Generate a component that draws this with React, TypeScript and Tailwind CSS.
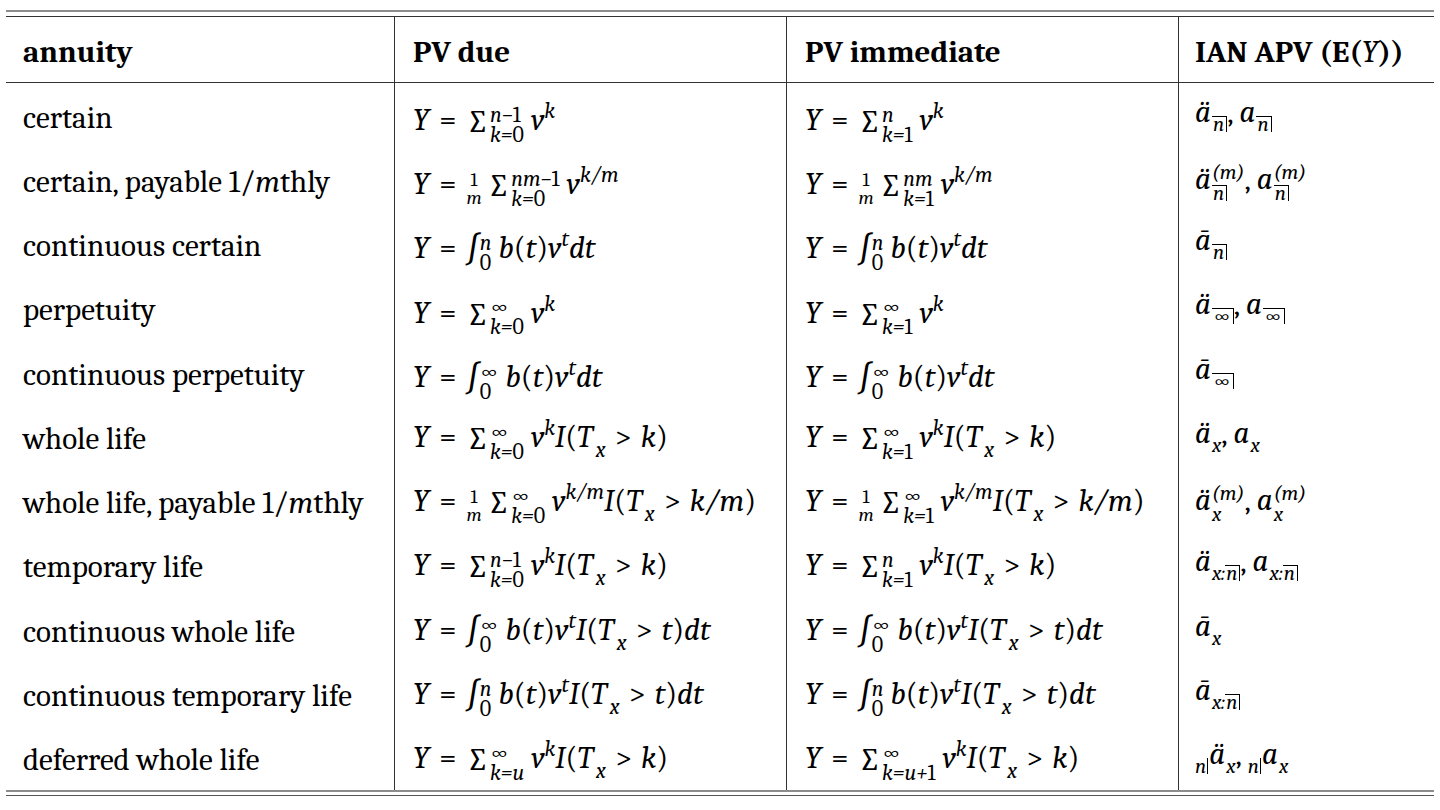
import React from "react";

type N = React.ReactNode;

const I = ({ children }: { children: N }) => <span className="italic">{children}</span>;
const Sup = ({ children }: { children: N }) => (
  <span className="text-[22px] italic align-[12px]">{children}</span>
);
const Sub = ({ children }: { children: N }) => (
  <span className="text-[22px] italic align-[-10px] ml-[3px]">{children}</span>
);

const Stack = ({ sup, sub }: { sup: N; sub: N }) => (
  <span className="inline-flex flex-col align-middle text-[22px] leading-[20px] italic ml-[1px] mr-[7px] relative top-[2px]">
    <span>{sup}</span>
    <span>{sub}</span>
  </span>
);

const Eq = () => (
  <>
    <I>Y</I>
    <span className="mx-[10px]">=</span>
  </>
);

const Frac = () => (
  <span className="inline-flex flex-col items-center align-middle text-[19px] leading-[18px] mr-[6px] relative top-[2px]">
    <span>1</span>
    <span className="italic">m</span>
  </span>
);

const Sum = ({ sub, sup }: { sub: N; sup: N }) => (
  <>
    <span className="text-[32px] relative top-[2px]">∑</span>
    <Stack sup={sup} sub={sub} />
  </>
);

const Int = ({ sup }: { sup: N }) => (
  <>
    <span className="italic text-[33px] relative top-[2px]">∫</span>
    <Stack sup={sup} sub={<span className="not-italic">0</span>} />
  </>
);

const Ind = ({ v }: { v: N }) => (
  <>
    <I>I</I>(<I>T</I>
    <Sub>x</Sub>
    <span className="mx-[9px]">&gt;</span>
    <I>{v}</I>)
  </>
);

const Btv = () => (
  <>
    <I>b</I>(<I>t</I>)<I>v</I>
    <Sup>t</Sup>
  </>
);

const Angle = ({ children }: { children: N }) => (
  <span className="inline-block border-t border-r border-black leading-[15px] pl-[1px] pr-[2px]">{children}</span>
);

const An = ({ base, sub }: { base: N; sub: N }) => (
  <>
    <I>{base}</I>
    <span className="inline-block align-[-9px] text-[21px] italic ml-[1px]">{sub}</span>
  </>
);

const AnM = ({ base, sub }: { base: N; sub: N }) => (
  <>
    <I>{base}</I>
    <span className="inline-flex flex-col align-middle text-[21px] leading-[21px] italic ml-[1px] relative top-[1px]">
      <span>(m)</span>
      <span>{sub}</span>
    </span>
  </>
);

const Minus = "−";
const Inf = () => <span className="not-italic">∞</span>;
const D = ({ d }: { d: string }) => <span className="not-italic">{d}</span>;

const rows: { name: N; due: N; imm: N; apv: N }[] = [
  {
    name: "certain",
    due: (
      <>
        <Eq />
        <Sum sub={<>k=<D d="0" /></>} sup={<>n{Minus}<D d="1" /></>} />
        <I>v</I>
        <Sup>k</Sup>
      </>
    ),
    imm: (
      <>
        <Eq />
        <Sum sub={<>k=<D d="1" /></>} sup="n" />
        <I>v</I>
        <Sup>k</Sup>
      </>
    ),
    apv: (
      <>
        <An base="ä" sub={<Angle>n</Angle>} />,{" "}
        <An base="a" sub={<Angle>n</Angle>} />
      </>
    ),
  },
  {
    name: (
      <>
        certain, payable 1/<I>m</I>thly
      </>
    ),
    due: (
      <>
        <Eq />
        <Frac />
        <Sum sub={<>k=<D d="0" /></>} sup={<>nm{Minus}<D d="1" /></>} />
        <I>v</I>
        <Sup>k/m</Sup>
      </>
    ),
    imm: (
      <>
        <Eq />
        <Frac />
        <Sum sub={<>k=<D d="1" /></>} sup="nm" />
        <I>v</I>
        <Sup>k/m</Sup>
      </>
    ),
    apv: (
      <>
        <AnM base="ä" sub={<Angle>n</Angle>} />, <AnM base="a" sub={<Angle>n</Angle>} />
      </>
    ),
  },
  {
    name: "continuous certain",
    due: (
      <>
        <Eq />
        <Int sup="n" />
        <Btv />
        <I>dt</I>
      </>
    ),
    imm: (
      <>
        <Eq />
        <Int sup="n" />
        <Btv />
        <I>dt</I>
      </>
    ),
    apv: <An base="ā" sub={<Angle>n</Angle>} />,
  },
  {
    name: "perpetuity",
    due: (
      <>
        <Eq />
        <Sum sub={<>k=<D d="0" /></>} sup={<Inf />} />
        <I>v</I>
        <Sup>k</Sup>
      </>
    ),
    imm: (
      <>
        <Eq />
        <Sum sub={<>k=<D d="1" /></>} sup={<Inf />} />
        <I>v</I>
        <Sup>k</Sup>
      </>
    ),
    apv: (
      <>
        <An base="ä" sub={<Angle><Inf /></Angle>} />,{" "}
        <An base="a" sub={<Angle><Inf /></Angle>} />
      </>
    ),
  },
  {
    name: "continuous perpetuity",
    due: (
      <>
        <Eq />
        <Int sup={<Inf />} />
        <Btv />
        <I>dt</I>
      </>
    ),
    imm: (
      <>
        <Eq />
        <Int sup={<Inf />} />
        <Btv />
        <I>dt</I>
      </>
    ),
    apv: <An base="ā" sub={<Angle><Inf /></Angle>} />,
  },
  {
    name: "whole life",
    due: (
      <>
        <Eq />
        <Sum sub={<>k=<D d="0" /></>} sup={<Inf />} />
        <I>v</I>
        <Sup>k</Sup>
        <Ind v="k" />
      </>
    ),
    imm: (
      <>
        <Eq />
        <Sum sub={<>k=<D d="1" /></>} sup={<Inf />} />
        <I>v</I>
        <Sup>k</Sup>
        <Ind v="k" />
      </>
    ),
    apv: (
      <>
        <An base="ä" sub="x" />, <An base="a" sub="x" />
      </>
    ),
  },
  {
    name: (
      <>
        whole life, payable 1/<I>m</I>thly
      </>
    ),
    due: (
      <>
        <Eq />
        <Frac />
        <Sum sub={<>k=<D d="0" /></>} sup={<Inf />} />
        <I>v</I>
        <Sup>k/m</Sup>
        <Ind v="k/m" />
      </>
    ),
    imm: (
      <>
        <Eq />
        <Frac />
        <Sum sub={<>k=<D d="1" /></>} sup={<Inf />} />
        <I>v</I>
        <Sup>k/m</Sup>
        <Ind v="k/m" />
      </>
    ),
    apv: (
      <>
        <AnM base="ä" sub="x" />, <AnM base="a" sub="x" />
      </>
    ),
  },
  {
    name: "temporary life",
    due: (
      <>
        <Eq />
        <Sum sub={<>k=<D d="0" /></>} sup={<>n{Minus}<D d="1" /></>} />
        <I>v</I>
        <Sup>k</Sup>
        <Ind v="k" />
      </>
    ),
    imm: (
      <>
        <Eq />
        <Sum sub={<>k=<D d="1" /></>} sup="n" />
        <I>v</I>
        <Sup>k</Sup>
        <Ind v="k" />
      </>
    ),
    apv: (
      <>
        <An base="ä" sub={<>x:<Angle>n</Angle></>} />,{" "}
        <An base="a" sub={<>x:<Angle>n</Angle></>} />
      </>
    ),
  },
  {
    name: "continuous whole life",
    due: (
      <>
        <Eq />
        <Int sup={<Inf />} />
        <Btv />
        <Ind v="t" />
        <I>dt</I>
      </>
    ),
    imm: (
      <>
        <Eq />
        <Int sup={<Inf />} />
        <Btv />
        <Ind v="t" />
        <I>dt</I>
      </>
    ),
    apv: <An base="ā" sub="x" />,
  },
  {
    name: "continuous temporary life",
    due: (
      <>
        <Eq />
        <Int sup="n" />
        <Btv />
        <Ind v="t" />
        <I>dt</I>
      </>
    ),
    imm: (
      <>
        <Eq />
        <Int sup="n" />
        <Btv />
        <Ind v="t" />
        <I>dt</I>
      </>
    ),
    apv: <An base="ā" sub={<>x:<Angle>n</Angle></>} />,
  },
  {
    name: "deferred whole life",
    due: (
      <>
        <Eq />
        <Sum sub="k=u" sup={<Inf />} />
        <I>v</I>
        <Sup>k</Sup>
        <Ind v="k" />
      </>
    ),
    imm: (
      <>
        <Eq />
        <Sum sub={<>k=u+<D d="1" /></>} sup={<Inf />} />
        <I>v</I>
        <Sup>k</Sup>
        <Ind v="k" />
      </>
    ),
    apv: (
      <>
        <span className="inline-block align-[-9px] text-[21px] italic leading-[16px] border-r border-black pr-[1px] mr-[1px]">n</span>
        <An base="ä" sub="x" />,{" "}
        <span className="inline-block align-[-9px] text-[21px] italic leading-[16px] border-r border-black pr-[1px] mr-[1px]">n</span>
        <An base="a" sub="x" />
      </>
    ),
  },
];

export default function App() {
  return (
    <div className="font-serif w-[1440px] h-[810px] bg-white text-black text-[31px] leading-[36px]">
      <div className="font-serif pt-[10px] px-[6px]">
        <div className="h-[2px] bg-[#8c8c8c]" />
        <div className="h-[4px]" />
        <div className="h-[1px] bg-[#333]" />
        <div className="font-serif grid grid-cols-[388px_392px_392px_256px]">
          <div className="font-serif h-[66px] border-b border-[#333] flex items-center pl-[17px] pt-[5px] font-bold">annuity</div>
          <div className="font-serif h-[66px] border-b border-l border-[#333] flex items-center pl-[18px] pt-[5px] font-bold">PV due</div>
          <div className="font-serif h-[66px] border-b border-l border-[#333] flex items-center pl-[18px] pt-[5px] font-bold">PV immediate</div>
          <div className="font-serif h-[66px] border-b border-l border-[#333] flex items-center pl-[16px] pt-[5px] font-bold">
            IAN APV (E(<span className="italic font-normal">Y</span>))
          </div>
          {rows.map((r, i) => (
            <React.Fragment key={i}>
              <div className="font-serif h-[64.27px] flex items-center pl-[17px] pt-[5px] whitespace-nowrap">{r.name}</div>
              <div className="font-serif h-[64.27px] border-l border-[#333] flex items-center pl-[18px] pt-[5px] whitespace-nowrap">
                <span>{r.due}</span>
              </div>
              <div className="font-serif h-[64.27px] border-l border-[#333] flex items-center pl-[18px] pt-[5px] whitespace-nowrap">
                <span>{r.imm}</span>
              </div>
              <div className="font-serif h-[64.27px] border-l border-[#333] flex items-center pl-[16px] pt-[5px] whitespace-nowrap">
                <span>{r.apv}</span>
              </div>
            </React.Fragment>
          ))}
        </div>
        <div className="h-[2px] bg-[#8c8c8c]" />
        <div className="h-[3px]" />
        <div className="h-[1px] bg-[#555]" />
      </div>
    </div>
  );
}
